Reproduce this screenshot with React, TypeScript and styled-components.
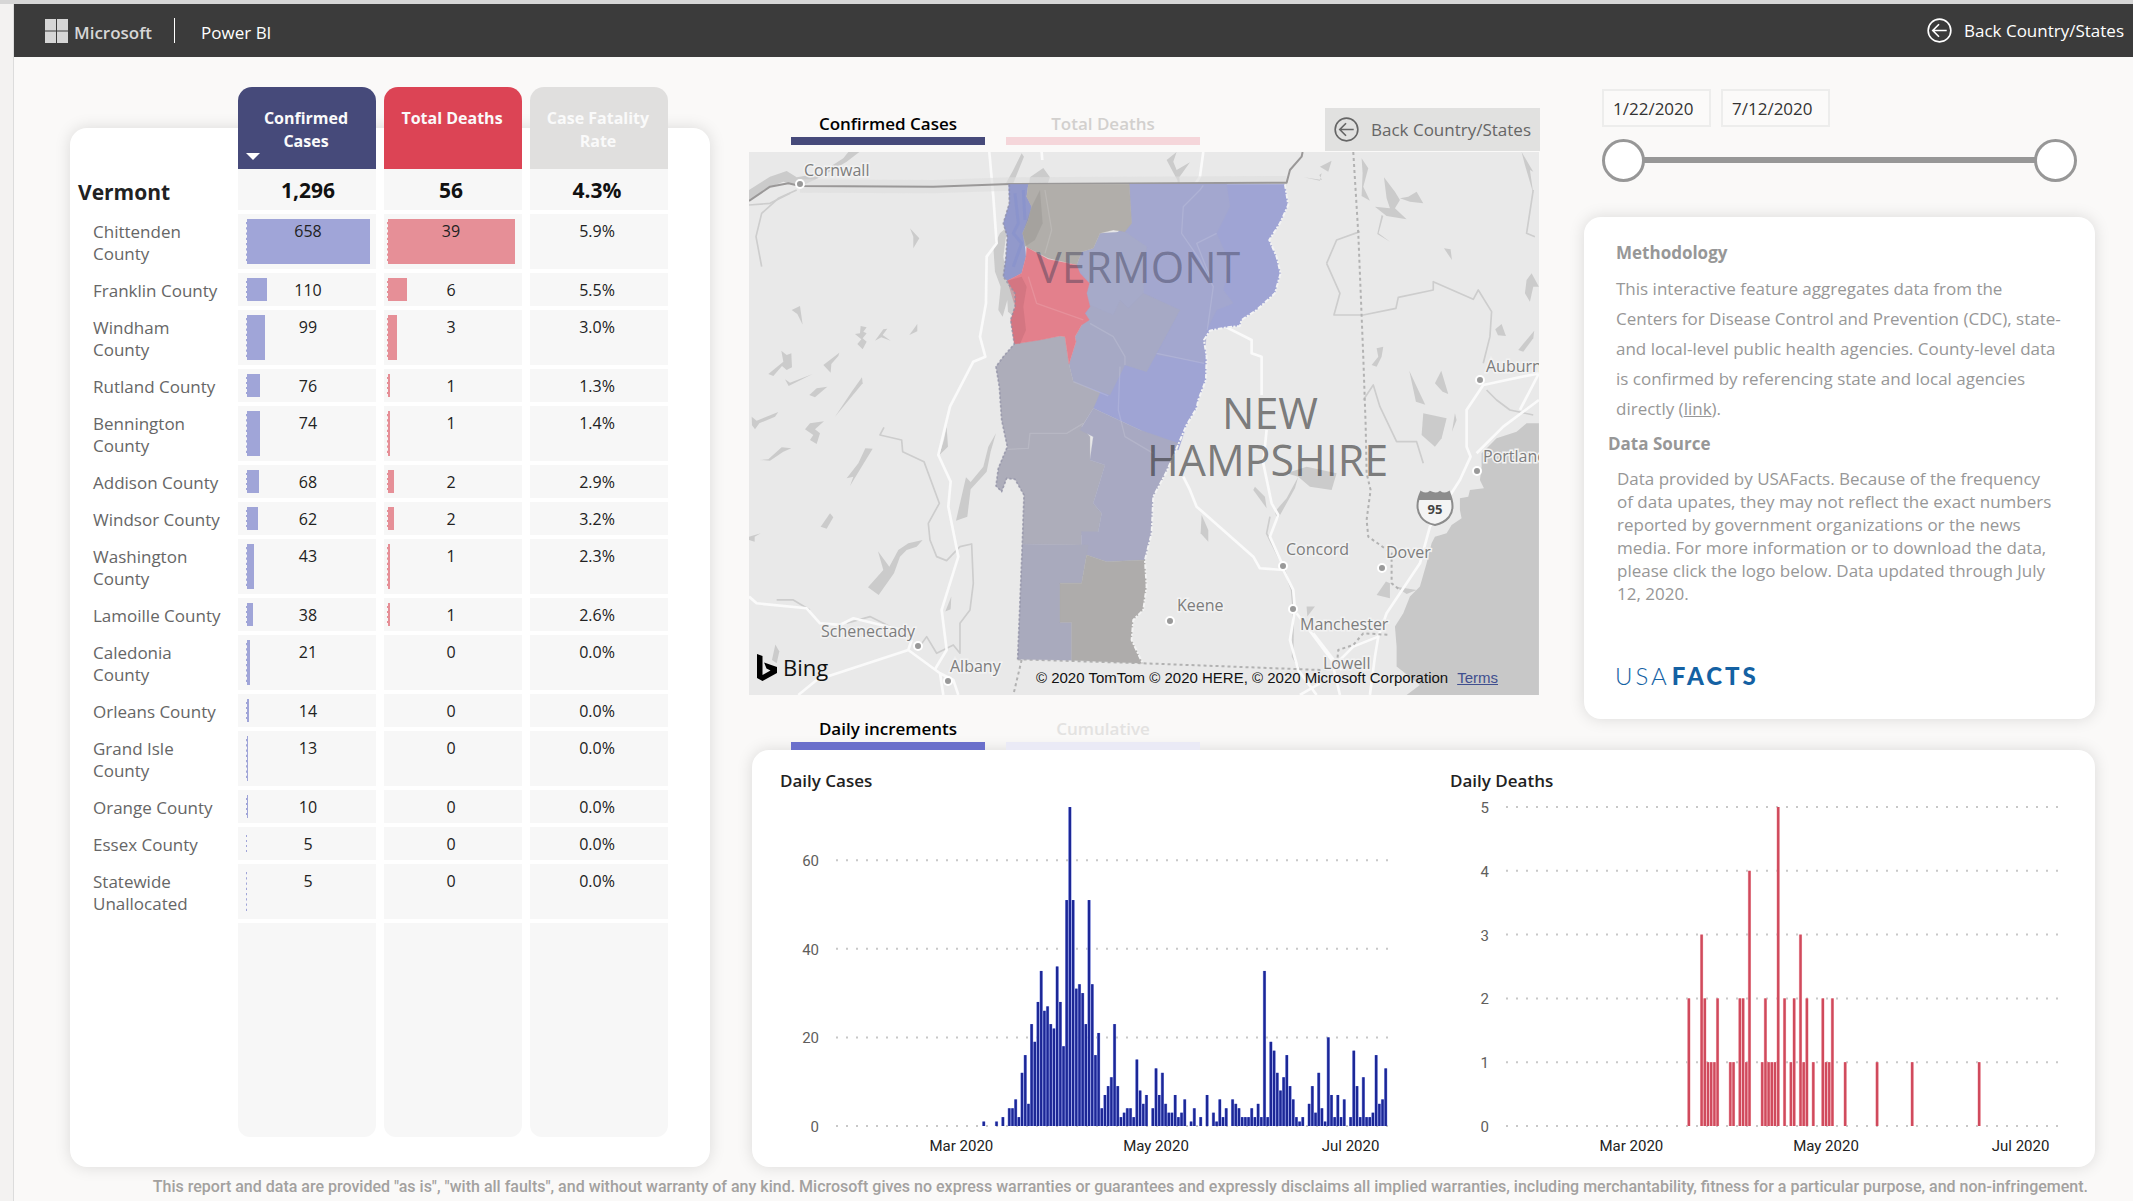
import React, { useState } from 'react';
import styled, { createGlobalStyle } from 'styled-components';

const UI = '"Open Sans", "Noto Sans", sans-serif';
const DIN = 'Roboto, "Liberation Sans", sans-serif';

const GlobalStyle = createGlobalStyle`
  *, *::before, *::after { box-sizing: border-box; }
  body { margin: 0; background: #f3f2f1; font-family: ${UI}; color: #222; }
  button, input { font-family: inherit; }
  h2, p { margin: 0; }
`;

const Page = styled.div`
  min-height: 100vh;
  padding-left: 13px;
  border-top: 4px solid #d6d6d6;
`;

const Report = styled.div`
  border-left: 1px solid #dcdcdc;
  background: #faf9f8;
  min-height: calc(100vh - 4px);
`;

const Header = styled.header`
  display: flex;
  align-items: center;
  height: 53px;
  padding: 0 9px 0 31px;
  background: #3b3b3b;
  color: #fff;
`;

const Brand = styled.span`
  margin-left: 6px;
  padding-top: 3px;
  font-size: 17px;
  font-weight: 600;
  color: #d6d6d6;
`;

const Divider = styled.span`
  width: 1px;
  height: 25px;
  margin: 0 26px 0 22px;
  background: #fff;
`;

const Product = styled.span`
  padding-top: 4px;
  font-size: 17px;
`;

const HeaderBack = styled.button`
  display: flex;
  align-items: center;
  gap: 12px;
  margin-left: auto;
  padding: 0;
  border: 0;
  background: none;
  color: #fff;
  font-size: 17px;
`;

const Main = styled.main`
  display: grid;
  grid-template-columns: 640fr 1346fr;
  gap: 39px;
  padding: 0 38px 0 56px;
`;

const card = `
  background: #fff;
  border-radius: 17px;
  box-shadow: 0 0 16px rgba(0, 0, 0, 0.13);
`;

const TableCard = styled.section`
  ${card}
  margin-top: 71px;
`;

const CountyTable = styled.table`
  margin-top: -41px;
  border-collapse: separate;
  border-spacing: 8px 0;
  table-layout: fixed;
  width: 606px;
  font-size: 16px;
  line-height: 22px;
`;

const CornerHead = styled.td`
  width: 152px;
`;

const MetricHead = styled.th<{ $bg: string }>`
  position: relative;
  width: 138px;
  height: 82px;
  padding: 20px 2px 0 0;
  vertical-align: top;
  background: ${(p) => p.$bg};
  border-radius: 14px 14px 0 0;
`;

const SortButton = styled.button`
  width: 100%;
  padding: 0 10px;
  border: 0;
  background: none;
  color: #fafafa;
  font-size: 16px;
  font-weight: 700;
  line-height: 23px;
`;

const SortArrow = styled.span`
  position: absolute;
  left: 8px;
  bottom: 9px;
  border: 7px solid transparent;
  border-top-color: #fff;
  border-bottom-width: 0;
`;

const TotalName = styled.th`
  height: 45px;
  padding: 0;
  text-align: left;
  font-size: 21px;
  font-weight: 700;
  color: #222;
`;

const TotalValue = styled.td`
  padding: 0 4px 0 0;
  border-bottom: 4px solid #fff;
  background: #f7f7f7;
  text-align: center;
  font-size: 21px;
  font-weight: 700;
  color: #111;
  &:nth-child(2) { padding: 0 0 0 2px; }
`;

const CountyName = styled.th`
  padding: 7px 0 8px 15px;
  text-align: left;
  vertical-align: top;
  font-size: 17px;
  font-weight: 400;
  color: #666;
`;

const Cell = styled.td`
  position: relative;
  padding: 6px 4px 5px 0;
  border-bottom: 4px solid #fff;
  background: #f7f7f7;
  background-clip: padding-box;
  vertical-align: top;
  text-align: center;
  color: #222;
  &:nth-child(2) { padding: 6px 0 5px 2px; }
`;

const CellBar = styled.span<{ $color: string; $left: number }>`
  position: absolute;
  top: 5px;
  bottom: 5px;
  left: ${(p) => p.$left}px;
  border-left: 1px dashed #f7f7f7;
  background: ${(p) => p.$color};
`;

const CellText = styled.span`
  position: relative;
`;

const Filler = styled.td`
  height: 214px;
  background: #f7f7f7;
  border-radius: 0 0 12px 12px;
`;

const Overview = styled.div`
  display: grid;
  grid-template-columns: 790fr 511fr;
  column-gap: 45px;
`;

const MapColumn = styled.section`
  padding-top: 51px;
`;

const TabRow = styled.div`
  display: flex;
  align-items: flex-start;
  gap: 21px;
  padding-left: 42px;
`;

const MapTabs = styled(TabRow)`
  height: 44px;
`;

const ChartTabs = styled(TabRow)`
  position: relative;
  z-index: 1;
  padding-top: 18px;
`;

const Tab = styled.button<{ $bar: string; $ink: string }>`
  width: 194px;
  height: 37px;
  padding: 2px 0 0;
  border: 0;
  border-bottom: 8px solid ${(p) => p.$bar};
  background: none;
  color: ${(p) => p.$ink};
  font-size: 17px;
  font-weight: 600;
`;

const BackButton = styled.button`
  display: flex;
  align-items: center;
  gap: 12px;
  height: 43px;
  margin: 0 -1px 0 auto;
  padding: 0 9px;
  border: 0;
  background: #e1e1e0;
  color: #666;
  font-size: 17px;
  white-space: nowrap;
`;

const MapFrame = styled.div`
  position: relative;
  overflow: hidden;
  background: #e9e9e9;
  svg { display: block; width: 100%; }
`;

const MapCredits = styled.div`
  position: absolute;
  right: 41px;
  bottom: 7px;
  display: flex;
  gap: 9px;
  font-family: "Liberation Sans", sans-serif;
  font-size: 15px;
  line-height: 20px;
  color: #111;
  a { color: #3f4f8f; }
`;

const Bing = styled.div`
  position: absolute;
  left: 8px;
  bottom: 12px;
  display: flex;
  align-items: center;
  gap: 6px;
  font-size: 22px;
  line-height: 32px;
  color: #111;
  svg { width: 20px; }
`;

const Side = styled.aside`
  display: flex;
  flex-direction: column;
  padding: 32px 0 31px;
`;

const Dates = styled.div`
  display: flex;
  gap: 10px;
  padding: 0 18px;
`;

const DateBox = styled.input`
  width: 109px;
  height: 38px;
  padding: 0 0 0 9px;
  border: 2px solid #ededec;
  background: #fbfaf9;
  color: #333;
  font-size: 17px;
`;

const Slider = styled.div`
  display: grid;
  align-items: center;
  margin: 11px 18px 0;
  &::before {
    content: '';
    grid-area: 1 / 1;
    height: 6px;
    margin: 0 20px;
    background: #979797;
  }
`;

const Range = styled.input`
  grid-area: 1 / 1;
  appearance: none;
  width: 100%;
  height: 44px;
  margin: 0;
  background: transparent;
  pointer-events: none;
  &::-webkit-slider-thumb {
    appearance: none;
    width: 43px;
    height: 43px;
    border: 3px solid #979797;
    border-radius: 50%;
    background: #fff;
    pointer-events: auto;
  }
`;

const InfoCard = styled.section`
  ${card}
  flex: 1;
  margin-top: 35px;
  padding: 21px 20px 0 24px;
  color: #979797;
  font-size: 17px;
`;

const InfoTitle = styled.h2<{ $indent?: boolean }>`
  padding-left: ${(p) => (p.$indent ? 8 : 0)}px;
  font-size: 17px;
  font-weight: 700;
  line-height: 30px;
`;

const Method = styled.p`
  padding: 6px 0 5px 8px;
  line-height: 30px;
  a { color: inherit; }
`;

const Source = styled.p`
  padding: 8px 0 0 9px;
  line-height: 23px;
`;

const FactsLogo = styled.a`
  display: block;
  margin: 56px 0 0 7px;
  font-family: Lato, sans-serif;
  font-size: 24px;
  font-weight: 300;
  line-height: 30px;
  letter-spacing: 3px;
  color: #1461a3;
  text-decoration: none;
  b { margin-left: 2px; font-weight: 900; }
`;

const ChartCard = styled.section`
  ${card}
  display: grid;
  grid-template-columns: 1fr 1fr;
  margin-left: 3px;
  padding: 16px 3px 0 0;
  height: 417px;
`;

const ChartBox = styled.figure`
  margin: 0;
  svg { display: block; width: 100%; }
`;

const ChartTitle = styled.figcaption`
  padding-left: 28px;
  font-size: 17px;
  font-weight: 600;
  line-height: 30px;
`;

const Footer = styled.footer`
  padding: 8px 45px 0 40px;
  text-align: right;
  font-family: ${DIN};
  font-size: 16px;
  font-weight: 500;
  line-height: 24px;
  color: #a3a19f;
`;

type County = [string, number, number, string];

const counties: County[] = [
  ['Chittenden County', 658, 39, '5.9%'],
  ['Franklin County', 110, 6, '5.5%'],
  ['Windham County', 99, 3, '3.0%'],
  ['Rutland County', 76, 1, '1.3%'],
  ['Bennington County', 74, 1, '1.4%'],
  ['Addison County', 68, 2, '2.9%'],
  ['Windsor County', 62, 2, '3.2%'],
  ['Washington County', 43, 1, '2.3%'],
  ['Lamoille County', 38, 1, '2.6%'],
  ['Caledonia County', 21, 0, '0.0%'],
  ['Orleans County', 14, 0, '0.0%'],
  ['Grand Isle County', 13, 0, '0.0%'],
  ['Orange County', 10, 0, '0.0%'],
  ['Essex County', 5, 0, '0.0%'],
  ['Statewide Unallocated', 5, 0, '0.0%'],
];

const wraps = ['Chittenden', 'Windham', 'Bennington', 'Washington', 'Caledonia', 'Grand Isle', 'Statewide'];

/* Day 0 is January 22; the case series starts on day 46. */
const caseSeries: [number, number][] = [
  1, 0, 0, 0, 1, 0, 2, 0, 4, 4, 6, 2, 12, 16, 5, 23, 19, 28, 35, 26, 27, 23, 22, 36, 28, 18, 51, 72, 51, 31, 32, 30,
  23, 51, 32, 16, 21, 4, 7, 9, 11, 23, 9, 2, 3, 4, 4, 2, 15, 8, 5, 7, 0, 4, 13, 7, 12, 5, 3, 3, 7, 2, 3, 6, 0, 1, 4,
  0, 2, 0, 7, 0, 3, 1, 6, 2, 4, 0, 6, 5, 4, 2, 2, 2, 4, 2, 5, 2, 35, 2, 19, 17, 12, 8, 11, 16, 9, 6, 2, 1, 2, 0, 5, 9,
  3, 12, 4, 1, 20, 7, 2, 7, 2, 6, 0, 2, 17, 9, 2, 11, 2, 2, 3, 16, 5, 6, 13,
].map((v, i) => [i + 46, v]);

const deathSeries: [number, number][] = [
  [57, 2], [61, 3], [62, 2], [63, 1], [64, 1], [65, 1], [66, 2], [70, 1], [71, 1], [73, 2], [74, 2], [75, 1],
  [76, 4], [80, 1], [81, 2], [82, 1], [83, 1], [84, 1], [85, 5], [87, 2], [89, 1], [90, 2], [92, 3], [93, 1],
  [94, 2], [96, 1], [99, 2], [100, 1], [101, 1], [102, 2], [106, 1], [116, 1], [127, 1], [148, 1],
];

const months: [string, number][] = [['Mar 2020', 39], ['May 2020', 100], ['Jul 2020', 161]];

function BackIcon({ size }: { size: number }) {
  return (
    <svg width={size} height={size} viewBox="0 0 26 26" fill="none" stroke="currentColor" strokeWidth="1.7">
      <circle cx="13" cy="13" r="11.8" />
      <path d="M20.5 13H6.500M12.500 6.500L6 13l6.500 6.500" />
    </svg>
  );
}

function BarChart(props: {
  title: string; data: [number, number][]; ticks: number[]; unit: number; fill: string; gap: string;
}) {
  const base = 330;
  const x = (d: number) => 85 + d * 3.19;
  return (
    <ChartBox>
      <ChartTitle>{props.title}</ChartTitle>
      <svg viewBox="0 0 670 360" role="img" aria-label={props.title} fontFamily={DIN} fontSize="15">
        {props.ticks.map((t) => (
          <g key={t}>
            <line x1="84" x2="636" y1={base - t * props.unit} y2={base - t * props.unit} stroke="#c8c8c8" strokeWidth="2" strokeDasharray="2 8" />
            <text x="67" y={base - t * props.unit + 6} textAnchor="end" fill="#605e5c">{t}</text>
          </g>
        ))}
        {props.data.filter((p) => p[1] > 0).map(([d, v]) => (
          <g key={d}>
            <rect x={x(d) - 1.6} width="3.19" y={base - v * props.unit} height={v * props.unit} fill={props.gap} />
            <rect x={x(d) - 1.1} width="2.3" y={base - v * props.unit} height={v * props.unit} fill={props.fill} />
          </g>
        ))}
        {months.map(([m, d]) => (
          <text key={m} x={x(d)} y="355" textAnchor="middle" fill="#222">{m}</text>
        ))}
      </svg>
    </ChartBox>
  );
}

/* Map geometry is digitised at three units per pixel. */
const countyShapes: [string, string][] = [
  ['#9fa4d4', '1228,283 1695,283 1705,345 1680,400 1648,450 1670,500 1682,550 1665,610 1610,660 1565,690 1560,708 1520,712 1470,722 1452,750 1460,800 1458,870 1435,930 1430,955 1400,1005 1375,1080 1260,1020 1120,955 1060,875 1100,700 1070,525 1120,475 1235,400'],
  ['#a3a7cf', '1228,283 1520,283 1530,350 1490,430 1530,520 1510,600 1540,640 1490,660 1460,720 1452,818 1310,795 1380,660 1270,610 1100,640 1070,525 1120,475 1235,400'],
  ['#a6aac9', '1070,525 1085,485 1120,475 1140,430 1215,425 1280,470 1270,610 1225,655 1200,630 1180,675 1110,645 1100,610 1108,580'],
  ['#a6a9c5', '1110,645 1180,675 1200,630 1225,655 1270,610 1380,660 1310,790 1280,845 1215,825 1170,915 1060,875 1047,822 1068,755 1065,740 1085,705'],
  ['#adadba', '883,762 1020,738 1035,740 1047,822 1060,875 1140,908 1120,955 1085,1010 1110,1040 1110,1110 1155,1125 1120,1240 1145,1270 1135,1325 1085,1335 1085,1365 907,1362 912,1215 885,1168 860,1165 845,1205 828,1188 835,1135 862,1070 845,990 838,890 828,830 850,800'],
  ['#a8a9c2', '1120,955 1260,1020 1375,1060 1340,1145 1300,1220 1295,1330 1275,1410 1160,1415 1100,1395 1085,1395 1085,1325 1135,1325 1145,1270 1120,1240 1155,1125 1110,1110 1120,1040 1080,1020'],
  ['#a9aabd', '907,1362 1105,1365 1085,1480 1020,1480 1020,1597 1055,1597 1055,1711 893,1708'],
  ['#aeacab', '1100,1395 1160,1415 1275,1410 1280,1490 1270,1560 1240,1590 1235,1650 1268,1720 1055,1711 1055,1597 1020,1597 1020,1480 1085,1480'],
  ['#9299cb', '866,283 925,283 920,320 935,350 925,390 908,430 915,470 918,500 905,550 862,572 850,560 858,500 862,440 850,400 868,340'],
  ['#b1aeaa', '925,283 1228,283 1235,400 1215,425 1180,420 1140,430 1120,475 1085,485 1070,525 1030,515 985,505 920,472 908,430 925,390 935,350 920,320'],
  ['#e3808c', '920,472 985,508 1070,525 1080,550 1108,580 1100,610 1110,650 1095,670 1108,690 1085,705 1065,740 1068,755 1047,822 1035,740 1020,738 960,750 883,762 872,690 885,650 885,610 862,572 905,550 918,500'],
];

const lakes = [
  'M87,300L150,260 200,243 230,262 300,250 370,205 385,186 418,186 380,215 300,262 240,290 190,275 130,300 87,333Z',
  'M570,415L598,445 580,475 580,440Z', 'M215,660L240,648 248,704 232,672Z',
  'M405,732L420,730 422,708 440,712 430,725 440,730 428,745 440,755 428,778 412,762 424,748Z',
  'M465,752L490,718 502,716 488,735 512,752 484,742Z', 'M568,735L592,702 592,724Z',
  'M145,852L190,815 184,782 200,795 214,790 216,832 200,840 186,828 160,858Z',
  'M310,825L358,788 355,798 334,822 332,848Z', 'M195,868L210,878 278,852 206,888Z',
  'M268,915L290,895 322,890 285,922Z', 'M426,862L428,880 345,980 395,905Z',
  'M95,980L110,992 175,966 165,980 118,1000 105,1018 96,1006Z',
  'M255,1018L270,1000 312,994 285,1018 300,1030 290,1062 270,1050 280,1035Z',
  'M120,1110L145,1108 185,1072 214,1075 190,1085 150,1112Z',
  'M436,1075L458,1076 425,1130 390,1188 400,1160 380,1165 415,1120Z',
  'M330,1270L340,1282 320,1316 302,1310Z', 'M87,1340L122,1330 104,1340 104,1355 87,1350Z',
  'M474,1384L508,1430 535,1380 565,1360 608,1350 590,1370 560,1380 540,1400 522,1450 476,1515 444,1492 490,1440Z',
  'M680,1010L684,1070 658,1095 672,1050Z', 'M828,1030L812,1085 800,1145 752,1198 742,1280 708,1292 738,1162 752,1176 790,1130 805,1070Z',
  'M694,1520L692,1558 676,1565Z', 'M166,1664L178,1685 170,1720 156,1710Z', 'M880,280L912,200 905,190 880,240 858,280Z',
  'M820,470L840,430 862,410 850,500 860,560 884,605 882,680 864,665 862,630 848,680 835,660 842,590 825,545Z',
  'M930,262L970,234 990,262 980,290 965,300 960,420 915,470 905,430 935,390 920,330Z',
  'M1340,210L1370,186 1360,215 1370,240 1410,217 1378,262 1385,335 1372,270Z',
  'M1800,230L1835,212 1825,245Z', 'M1752,262L1806,270 1798,255 1805,250 1800,272Z',
  'M1925,205L1945,235 1930,290 1950,332 1925,318 1928,250Z',
  'M1992,262L2025,305 2040,330 2025,355 2060,388 2000,378 1965,350 2010,355 2000,325Z',
  'M2040,325L2065,320 2090,305 2110,340 2070,335Z', 'M1990,378L1976,430 2010,455 1972,432 1985,375Z',
  'M2172,475L2192,478 2196,510Z', 'M2326,718L2345,702 2358,738 2334,736Z', 'M2395,780L2443,722 2440,745 2410,785Z',
  'M2420,570L2435,550 2457,590 2440,590 2430,635 2415,610Z', 'M2068,842L2095,900 2116,944 2088,935Z',
  'M2145,880L2164,842 2185,912 2168,905Z', 'M2405,186L2440,245 2430,240 2440,310 2415,225Z',
  'M1970,775L1990,770 1985,800 1970,830 1955,825 1975,800Z',
  'M2110,970L2180,985 2165,1045 2145,1070 2105,1035Z', 'M2205,970L2210,990 2196,1025Z',
  'M1700,1150L1760,1130 1850,1150 1835,1200 1770,1190 1735,1160Z', 'M1600,1200L1640,1255 1635,1220 1605,1190Z',
  'M1665,1265L1700,1225 1735,1160 1725,1195 1700,1240 1672,1290Z', 'M1445,1275L1465,1320 1465,1355 1442,1330Z',
  'M1998,1475L2010,1480 2010,1525 1970,1515Z', 'M1760,1550L1785,1550 1762,1580Z', 'M2025,1490L2090,1500 2060,1512Z',
  'M1040,1524L1062,1535 1055,1555Z',
];

const rivers = [
  'M230,300L175,325 125,370 108,440 125,530', 'M87,345L150,340 210,310', 'M492,1012L480,1035 545,1050 548,1085 612,1115 658,1240 625,1300 630,1350 650,1400 680,1412 720,1370 755,1362 760,1480 750,1560 720,1600 720,1690 700,1665 650,1690 620,1640 600,1668',
  'M1820,520L1850,450 1920,425M1820,520L1860,610 1842,675 1930,675 2028,655 2035,622 2140,600 2140,575 2260,628 2275,600 2315,665 2310,740 2290,820',
  'M1930,930L1960,885 1980,950 2030,1055 2090,1055 2110,1120', 'M2300,900L2330,930 2370,960 2440,975', 'M2440,300L2420,430 2445,440',
  'M1650,1280L1640,1330 1690,1430 1715,1500 1720,1560 1718,1700 1740,1740', 'M170,1530L220,1530 270,1560M380,1600L450,1580 520,1615',
];

const roads = [
  'M808,186L820,320 830,460 800,500 798,640 780,740 796,800 760,815 690,950 655,1095 692,1175 685,1250 715,1400 665,1560 680,1680 645,1738',
  'M87,1520L110,1540 260,1555 300,1600 360,1605 400,1585 545,1620', 'M235,1815L290,1770 565,1680 660,1750 700,1770 715,1815M660,1750L670,1815M565,1680L575,1650',
  'M965,186L967,210', 'M1450,186L1440,260 1390,340 1385,420 1440,500 1480,590 1470,720', 'M1520,712L1595,750 1595,790 1625,800 1625,915',
  'M1390,1160L1410,1200 1430,1250 1600,1400 1620,1435 1690,1440 1720,1500 1725,1560 1710,1650 1735,1740 1790,1815',
  'M1640,1020L1630,1120 1655,1240 1675,1275 1650,1340 1690,1430', 'M1730,1570L1835,1710 1860,1815', 'M1780,1630L1865,1740',
  'M2457,850L2360,870 2290,885 2240,960 2240,1070 2252,1100 2220,1170 2130,1310 2100,1420 2050,1495 2000,1570 1975,1640 1965,1700 1950,1815',
  'M2270,1090L2350,1010 2457,930M2457,850L2400,960', 'M1975,1640L1900,1670 1860,1710M1740,1815L1800,1780',
];

const cities: [string, number, number, number, number][] = [
  ['Cornwall', 55, 24, 51, 32], ['Auburn', 737, 220, 731, 228], ['Portland', 734, 310, 728, 319],
  ['Concord', 537, 403, 534, 414], ['Dover', 637, 406, 633, 416], ['Keene', 428, 459, 421, 469],
  ['Manchester', 551, 478, 544, 457], ['Schenectady', 72, 485, 169, 494], ['Albany', 201, 520, 199, 529],
];

function VermontMap() {
  return (
    <MapFrame>
      <svg viewBox="0 0 790 543" role="img" aria-label="Confirmed cases by county in Vermont" fontFamily={UI}>
        <g transform="scale(0.3333) translate(-87 -186)" strokeLinejoin="round">
          <path fill="#c8c8c8" d="M2457,1000L2420,1000 2390,1025 2360,1035 2330,1045 2305,1070 2285,1090 2285,1130 2280,1170 2292,1195 2250,1200 2245,1220 2220,1225 2220,1260 2225,1285 2195,1305 2180,1330 2145,1340 2135,1360 2120,1420 2100,1490 2070,1520 2050,1570 2025,1610 2030,1670 2030,1730 2100,1785 2060,1815 2457,1815Z" />
          <g fill="#cbcbcb">{lakes.map((d) => <path key={d} d={d} />)}</g>
          <g fill="none" stroke="#cdcdcd" strokeWidth="5">{rivers.map((d) => <path key={d} d={d} />)}</g>
          <g fill="none" stroke="#fafafa" strokeWidth="8">{roads.map((d) => <path key={d} d={d} />)}</g>
          <path d="M240,288L640,290 870,282 1700,278" fill="none" stroke="#dedede" strokeWidth="40" opacity="0.6" />
          <path d="M87,333L150,290 205,280 240,288 640,290 870,282 1700,278 1710,240 1745,200 1748,186" fill="none" stroke="#9a9898" strokeWidth="6" />
          <path d="M1900,186L1915,430 1930,800 1937,1000 1940,1150 1952,1200 1940,1290 1945,1340 2015,1390 2015,1480 2040,1500M893,1708L1270,1720 1800,1740 1850,1735 1855,1680 1900,1665 1930,1630 2010,1635M905,1710L880,1815" fill="none" stroke="#b2b2b2" strokeWidth="6" strokeDasharray="9 9" />
          {countyShapes.map(([fill, pts]) => (
            <polygon key={pts} points={pts} fill={fill} stroke={fill} strokeWidth="1" />
          ))}
          <g fill="none" stroke="#fff" strokeOpacity="0.13" strokeWidth="4">
            <path d="M975,300L995,420 975,490M925,560L950,640 1090,690M1110,700L1180,740 1215,800 1215,825M862,1078L925,1075 930,1030 1040,1030 1090,1000M1450,286L1440,300 1390,350 1385,430 1440,510 1480,590 1462,720M1060,875L1165,918M1310,790L1452,820M1490,430L1430,460 1470,560M1200,830L1195,960 1215,1040 1300,1090" />
          </g>
          <path d="M862,572L905,560 920,590 910,650 918,720 900,762 883,762 872,690 885,650Z" fill="#bd6674" opacity="0.4" />
          <path d="M935,350L960,300 968,400 945,450 915,470 908,430Z" fill="#969491" opacity="0.45" />
          <path d="M885,310L895,400 880,430 905,460 880,530M910,300L915,390" fill="none" stroke="#7886cf" strokeWidth="9" opacity="0.25" />
          <path d="M868,283L868,340 850,400 862,440 858,500 850,560 885,610 885,650 872,690 883,762 850,800 828,830 838,890 845,990 862,1070 835,1135 828,1188 845,1205 860,1165 885,1168 912,1215 907,1362 893,1708" fill="none" stroke="#8f8fa4" strokeWidth="5" strokeDasharray="7 6" opacity="0.7" />
          <path d="M1695,283L1705,345 1680,400 1648,450 1670,500 1682,550 1665,610 1610,660 1565,690 1560,708 1520,712 1470,722 1452,750 1460,800 1458,870 1435,930 1430,955 1400,1005 1340,1145 1300,1220 1295,1330 1275,1410 1280,1490 1270,1560 1240,1590 1235,1650 1268,1720" fill="none" stroke="#f3f3f3" strokeWidth="6" strokeDasharray="14 5 6 4" />
        </g>
        <g fill="#3b3b55" fillOpacity="0.62">
          <text x="287" y="131" fontSize="43" fillOpacity="0.45">VERMONT</text>
          <text x="473" y="277" fontSize="43" fill="#333">NEW</text>
          <text x="398" y="324" fontSize="43" fill="#333">HAMPSHIRE</text>
        </g>
        <g fontSize="16" fill="#7d7d7d" stroke="#f2f2f2" strokeWidth="3" paintOrder="stroke">
          {cities.map(([name, x, y]) => <text key={name} x={x} y={y}>{name}</text>)}
          <text x="574" y="517">Lowell</text>
        </g>
        {cities.map(([name, , , x, y]) => (
          <circle key={name} cx={x} cy={y} r="4" fill="#999" stroke="#fff" strokeWidth="2" />
        ))}
        <g>
          <path d="M672 340q5 3 9 0q6 3 10 0q4 3 9 0q7 16 0 25q-5 6-14 8q-10-2-14-8q-7-10 0-25z" fill="#f4f4f4" stroke="#8c8c8c" strokeWidth="2" />
          <path d="M672 340q5 3 9 0q6 3 10 0q4 3 9 0l3 8h-34z" fill="#8c8c8c" />
          <text x="686" y="362" fontSize="13" fontWeight="700" textAnchor="middle" fill="#444">95</text>
        </g>
      </svg>
      <Bing>
        <svg viewBox="0 0 20 27" fill="#000">
          <path d="M0 0l5.500 2v19l8-4.600-4-1.800-2.400-6.200L20 13v6L5.500 27 0 24z" />
        </svg>
        Bing
      </Bing>
      <MapCredits>
        <span>© 2020 TomTom © 2020 HERE, © 2020 Microsoft Corporation</span>
        <a href="#terms">Terms</a>
      </MapCredits>
    </MapFrame>
  );
}

function MetricBar({ value, max, full, left, color }: { value: number; max: number; full: number; left: number; color: string }) {
  if (!value) return null;
  return <CellBar $color={color} $left={left} style={{ width: Math.max(1, (value / max) * full) }} />;
}

export default function App() {
  const [from, setFrom] = useState(0);
  const [to, setTo] = useState(172);
  return (
    <>
      <GlobalStyle />
      <Page>
        <Report>
          <Header>
            <svg width="23" height="24" viewBox="0 0 23 24" fill="#d6d6d6">
              <path d="M0 0h11v11.500H0zM12 0h11v11.500H12zM0 12.500h11V24H0zM12 12.500h11V24H12z" />
            </svg>
            <Brand>Microsoft</Brand>
            <Divider />
            <Product>Power BI</Product>
            <HeaderBack><BackIcon size={25} />Back Country/States</HeaderBack>
          </Header>
          <Main>
            <TableCard>
              <CountyTable>
                <thead>
                  <tr>
                    <CornerHead />
                    <MetricHead $bg="#464a7a"><SortButton>Confirmed Cases</SortButton><SortArrow /></MetricHead>
                    <MetricHead $bg="#dc4455"><SortButton>Total Deaths</SortButton></MetricHead>
                    <MetricHead $bg="#e0dfde"><SortButton>Case Fatality Rate</SortButton></MetricHead>
                  </tr>
                </thead>
                <tbody>
                  <tr>
                    <TotalName scope="row">Vermont</TotalName>
                    <TotalValue>1,296</TotalValue>
                    <TotalValue>56</TotalValue>
                    <TotalValue>4.3%</TotalValue>
                  </tr>
                  {counties.map(([name, cases, deaths, rate]) => {
                    const head = wraps.find((w) => name.startsWith(w));
                    return (
                      <tr key={name}>
                        <CountyName scope="row">
                          {head ? <>{head}<br />{name.slice(head.length + 1)}</> : name}
                        </CountyName>
                        <Cell>
                          <MetricBar value={cases} max={658} full={124} left={8} color="#a0a5d8" />
                          <CellText>{cases}</CellText>
                        </Cell>
                        <Cell>
                          <MetricBar value={deaths} max={39} full={128} left={3} color="#e68f97" />
                          <CellText>{deaths}</CellText>
                        </Cell>
                        <Cell>{rate}</Cell>
                      </tr>
                    );
                  })}
                  <tr>
                    <td />
                    <Filler />
                    <Filler />
                    <Filler />
                  </tr>
                </tbody>
              </CountyTable>
            </TableCard>
            <div>
              <Overview>
                <MapColumn>
                  <MapTabs>
                    <Tab $bar="#464a7a" $ink="#000">Confirmed Cases</Tab>
                    <Tab $bar="#f5d6da" $ink="#d2d0ce">Total Deaths</Tab>
                    <BackButton><BackIcon size={25} />Back Country/States</BackButton>
                  </MapTabs>
                  <VermontMap />
                  <ChartTabs>
                    <Tab $bar="#6a6fcb" $ink="#000">Daily increments</Tab>
                    <Tab $bar="#eaeaf6" $ink="#e3e2e1">Cumulative</Tab>
                  </ChartTabs>
                </MapColumn>
                <Side>
                  <Dates>
                    <DateBox aria-label="Start date" defaultValue="1/22/2020" />
                    <DateBox aria-label="End date" defaultValue="7/12/2020" />
                  </Dates>
                  <Slider>
                    <Range type="range" aria-label="Start day" min={0} max={172} value={from} onChange={(e) => setFrom(Number(e.target.value))} />
                    <Range type="range" aria-label="End day" min={0} max={172} value={to} onChange={(e) => setTo(Number(e.target.value))} />
                  </Slider>
                  <InfoCard>
                    <InfoTitle $indent>Methodology</InfoTitle>
                    <Method>
                      This interactive feature aggregates data from the<br />
                      Centers for Disease Control and Prevention (CDC), state-<br />
                      and local-level public health agencies. County-level data<br />
                      is confirmed by referencing state and local agencies<br />
                      directly (<a href="#agencies">link</a>).
                    </Method>
                    <InfoTitle>Data Source</InfoTitle>
                    <Source>
                      Data provided by USAFacts. Because of the frequency<br />
                      of data upates, they may not reflect the exact numbers<br />
                      reported by government organizations or the news<br />
                      media. For more information or to download the data,<br />
                      please click the logo below. Data updated through July<br />
                      12, 2020.
                    </Source>
                    <FactsLogo href="#usafacts">USA<b>FACTS</b></FactsLogo>
                  </InfoCard>
                </Side>
              </Overview>
              <ChartCard>
                <BarChart title="Daily Cases" data={caseSeries} ticks={[0, 20, 40, 60]} unit={4.43} fill="#1c2796" gap="#8f9be8" />
                <BarChart title="Daily Deaths" data={deathSeries} ticks={[0, 1, 2, 3, 4, 5]} unit={63.8} fill="#d04a5c" gap="#f3b5bd" />
              </ChartCard>
            </div>
          </Main>
          <Footer>
            This report and data are provided "as is", "with all faults", and without warranty of any kind. Microsoft gives no express warranties or guarantees and expressly disclaims all implied warranties, including merchantability, fitness for a particular purpose, and non-infringement.
          </Footer>
        </Report>
      </Page>
    </>
  );
}
